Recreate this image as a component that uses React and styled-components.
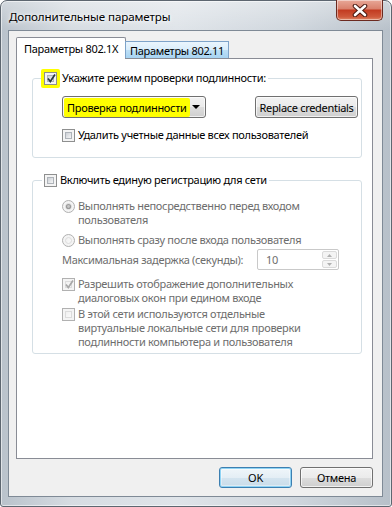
import React from 'react';
import styled, { createGlobalStyle, css } from 'styled-components';

const Global = createGlobalStyle`
  html, body { margin: 0; padding: 0; background: #fff; }
  body { font-family: "Noto Sans", "DejaVu Sans", sans-serif; font-size: 11px; letter-spacing: -0.3px; color: #000; }
  * { box-sizing: border-box; }
`;

const Window = styled.div`
  width: 392px;
  height: 507px;
  display: flex;
  flex-direction: column;
  padding: 0 8px 9px 7px;
  border: 1px solid #5d6670;
  border-radius: 7px 7px 3px 3px;
  background: linear-gradient(180deg, rgba(255,255,255,0.35), rgba(255,255,255,0) 30px),
    linear-gradient(90deg, #b9c2cb 0%, #d6dce2 18%, #dfe4e9 45%, #cfd6dd 75%, #b7c0c9 100%);
  box-shadow: inset 0 0 0 1px rgba(255,255,255,0.55);
`;

const TitleBar = styled.div`
  height: 29px;
  display: flex;
  align-items: center;
  padding-left: 1px;
`;

const Title = styled.div`
  font-size: 11.6px;
  letter-spacing: -0.1px;
  color: #000;
  text-shadow: 0 0 6px #fff, 0 0 3px #fff;
  padding-top: 1px;
  white-space: nowrap;
`;

const CloseButton = styled.div`
  margin-left: auto;
  align-self: flex-start;
  margin-top: -1px;
  width: 47px;
  height: 21px;
  display: flex;
  align-items: center;
  justify-content: center;
  border: 1px solid #6b2a20;
  border-top: none;
  border-radius: 0 0 5px 5px;
  background: linear-gradient(180deg, #e8a898 0%, #d9806c 45%, #c23a20 50%, #cf5a3c 85%, #e08a6a 100%);
  box-shadow: inset 0 0 0 1px rgba(255,255,255,0.45);
`;

const Client = styled.div`
  flex: 1;
  display: flex;
  flex-direction: column;
  background: #f0f0f0;
  border: 1px solid #7f8a96;
  padding: 6px 9px 8px 7px;
`;

const TabStrip = styled.div`
  display: flex;
  align-items: flex-end;
  height: 21px;
  position: relative;
  z-index: 1;
`;

const Tab = styled.div`
  display: flex;
  align-items: center;
  border: 1px solid #898c95;
  white-space: nowrap;
  ${p => p.$active ? css`
    width: 110px;
    height: 22px;
    margin-bottom: -1px;
    border-bottom: none;
    background: #fff;
    padding-left: 7px;
    padding-bottom: 1px;
    border-radius: 2px 2px 0 0;
  ` : css`
    width: 104px;
    height: 17px;
    margin-left: -1px;
    border-color: #7ea3c9;
    border-bottom: none;
    background: linear-gradient(180deg, #eaf5fd 0%, #d9edfb 50%, #bddff6 51%, #a7d3f2 100%);
    padding-left: 4px;
    padding-top: 1px;
  `}
`;

const Pane = styled.div`
  flex: 1;
  background: #fff;
  border: 1px solid #898c95;
  padding: 11px 12px 0 15px;
  display: flex;
  flex-direction: column;
`;

const Group = styled.fieldset`
  margin: ${p => p.$top || 0}px 0 0 0;
  width: 330px;
  border: 1px solid #d5dfe5;
  border-radius: 3px;
  padding: 0 3px ${p => p.$pb || 0}px 9px;
  min-width: 0;
`;

const Legend = styled.legend`
  padding: 0 2px;
  display: flex;
  align-items: center;
  gap: ${p => p.$gap || 4}px;
  height: 16px;
  line-height: 16px;
  white-space: nowrap;
`;

const GroupBody = styled.div`
  padding-left: 20px;
  display: flex;
  flex-direction: column;
`;

const Row = styled.div`
  display: flex;
  align-items: ${p => p.$align || 'flex-start'};
  justify-content: ${p => p.$justify || 'flex-start'};
  gap: ${p => p.$gap ?? 3}px;
  margin-top: ${p => p.$mt || 0}px;
`;

const Label = styled.div`
  line-height: 14px;
  color: ${p => p.$disabled ? '#6d6d6d' : '#000'};
  white-space: pre;
`;

const BoxWrap = styled.span`
  flex: none;
  width: 13px;
  height: 13px;
  margin-top: ${p => p.$mt || 0}px;
  display: inline-flex;
  position: relative;
  border: 1px solid ${p => p.$disabled ? '#b1b1b1' : '#8e8f8f'};
  border-radius: ${p => p.$round ? '50%' : '0'};
  background: #f4f4f4;
  padding: 2px;
`;

const BoxInner = styled.span`
  flex: 1;
  border: 1px solid ${p => p.$disabled ? '#dcdcdc' : '#aeb3b9'};
  border-radius: ${p => p.$round ? '50%' : '0'};
  background: ${p => p.$disabled
    ? 'linear-gradient(135deg, #f0f0f0, #fafafa)'
    : 'linear-gradient(135deg, #cbcfd5, #f6f6f6)'};
`;

const Highlight = styled.span`
  background: #ffff00;
  display: inline-flex;
  align-items: center;
  white-space: nowrap;
  padding: ${p => p.$pad || '3px'};
  margin: ${p => p.$m || '-3px'};
  border-radius: 2px;
`;

const Check = ({ checked, disabled, round, mt }) => (
  <BoxWrap $disabled={disabled} $round={round} $mt={mt}>
    <BoxInner $disabled={disabled} $round={round} />
    {checked && !round && (
      <svg width="11" height="11" viewBox="0 0 11 11" style={{ position: 'absolute', left: 1, top: 0 }}>
        <path d="M2 5.5 L4.3 8.5 L9 1.5" fill="none" stroke={disabled ? '#a8a8a8' : '#2a3b3f'} strokeWidth="1.7" />
      </svg>
    )}
    {checked && round && (
      <svg width="11" height="11" viewBox="0 0 11 11" style={{ position: 'absolute', left: 0, top: 0 }}>
        <circle cx="5.5" cy="5.5" r="2.6" fill="#9a9a9a" />
        <circle cx="5.5" cy="5.5" r="1.4" fill="#c6c6c6" />
      </svg>
    )}
  </BoxWrap>
);

const Combo = styled.div`
  width: 144px;
  height: 22px;
  flex: none;
  display: flex;
  align-items: center;
  justify-content: space-between;
  padding: 0 5px 0 4px;
  border: 1px solid #707070;
  border-radius: 3px;
  background: linear-gradient(180deg, #f2f2f2 0%, #ebebeb 50%, #dddddd 51%, #cfcfcf 100%);
  box-shadow: inset 0 0 0 1px rgba(255,255,255,0.7);
`;

const PushButton = styled.div`
  width: ${p => p.$w || 73}px;
  height: ${p => p.$h || 21}px;
  flex: none;
  white-space: nowrap;
  display: flex;
  align-items: center;
  justify-content: center;
  border: 1px solid ${p => p.$default ? '#3c7fb1' : '#707070'};
  border-radius: 3px;
  background: linear-gradient(180deg, #f2f2f2 0%, #ebebeb 50%, #dddddd 51%, #cfcfcf 100%);
  box-shadow: inset 0 0 0 1px rgba(255,255,255,0.7);
  ${p => p.$default && css`
    background: linear-gradient(180deg, #f0f6fa 0%, #e4eef5 50%, #d4e4ef 51%, #c9dce9 100%);
    box-shadow: inset 0 0 0 1px #8fd3f4, inset 0 0 0 2px rgba(255,255,255,0.4);
  `}
`;

const Spin = styled.div`
  margin-left: auto;
  margin-right: 19px;
  width: 82px;
  height: 21px;
  flex: none;
  display: flex;
  border: 1px solid #c9c9c9;
  border-radius: 2px;
  background: #fff;
  padding: 1px 1px 1px 8px;
  align-items: stretch;
`;

const SpinText = styled.div`
  flex: 1;
  display: flex;
  align-items: center;
  color: #6d6d6d;
`;

const SpinButtons = styled.div`
  width: 15px;
  display: flex;
  flex-direction: column;
  gap: 1px;
`;

const SpinBtn = styled.div`
  flex: 1;
  display: flex;
  align-items: center;
  justify-content: center;
  border: 1px solid #dadada;
  border-radius: 2px;
  background: #f4f4f4;
`;

const Footer = styled.div`
  display: flex;
  justify-content: flex-end;
  gap: 8px;
  margin-top: 8px;
`;

const Tri = ({ up, color = '#000', w = 7, h = 4 }) => (
  <svg width={w} height={h} viewBox={`0 0 ${w} ${h}`}>
    <path d={up ? `M0 ${h} L${w / 2} 0 L${w} ${h} Z` : `M0 0 L${w} 0 L${w / 2} ${h} Z`} fill={color} />
  </svg>
);

export default function App() {
  return (
    <>
      <Global />
      <Window>
        <TitleBar>
          <Title>Дополнительные параметры</Title>
          <CloseButton>
            <svg width="16" height="13" viewBox="0 0 16 13">
              <path d="M3 2 L13 11 M13 2 L3 11" stroke="#4a1a12" strokeWidth="4.6" strokeLinecap="round" />
              <path d="M3 2 L13 11 M13 2 L3 11" stroke="#fff" strokeWidth="2.6" strokeLinecap="round" />
            </svg>
          </CloseButton>
        </TitleBar>
        <Client>
          <TabStrip>
            <Tab $active>Параметры 802.1X</Tab>
            <Tab>Параметры 802.11</Tab>
          </TabStrip>
          <Pane>
            <Group $pb={15}>
              <Legend $gap={5}>
                <Highlight><Check checked /></Highlight>
                <span>Укажите режим проверки подлинности:</span>
              </Legend>
              <GroupBody>
                <Row $mt={10} $align="center" $justify="space-between">
                  <Combo>
                    <Highlight $pad="2px 3px" $m="-2px -3px">Проверка подлинности</Highlight>
                    <Tri w={8} h={4} />
                  </Combo>
                  <PushButton $w={103} $h={22}>Replace credentials</PushButton>
                </Row>
                <Row $mt={10} $align="center">
                  <Check />
                  <Label>Удалить учетные данные всех пользователей</Label>
                </Row>
              </GroupBody>
            </Group>
            <Group $top={14} $pb={4}>
              <Legend $gap={3}>
                <Check />
                <span>Включить единую регистрацию для сети</span>
              </Legend>
              <GroupBody>
                <Row $mt={11}>
                  <Check round checked disabled mt={1} />
                  <Label $disabled>{'Выполнять непосредственно перед входом\nпользователя'}</Label>
                </Row>
                <Row $mt={6}>
                  <Check round disabled mt={1} />
                  <Label $disabled>Выполнять сразу после входа пользователя</Label>
                </Row>
                <Row $mt={2} $align="center">
                  <Label $disabled>Максимальная задержка (секунды):</Label>
                  <Spin>
                    <SpinText>10</SpinText>
                    <SpinButtons>
                      <SpinBtn><Tri up color="#b0b0b0" w={5} h={3} /></SpinBtn>
                      <SpinBtn><Tri color="#b0b0b0" w={5} h={3} /></SpinBtn>
                    </SpinButtons>
                  </Spin>
                </Row>
                <Row $mt={7}>
                  <Check checked disabled mt={1} />
                  <Label $disabled>{'Разрешить отображение дополнительных\nдиалоговых окон при едином входе'}</Label>
                </Row>
                <Row $mt={2}>
                  <Check disabled mt={1} />
                  <Label $disabled>{'В этой сети используются отдельные\nвиртуальные локальные сети для проверки\nподлинности компьютера и пользователя'}</Label>
                </Row>
              </GroupBody>
            </Group>
          </Pane>
          <Footer>
            <PushButton $default>OK</PushButton>
            <PushButton>Отмена</PushButton>
          </Footer>
        </Client>
      </Window>
    </>
  );
}
